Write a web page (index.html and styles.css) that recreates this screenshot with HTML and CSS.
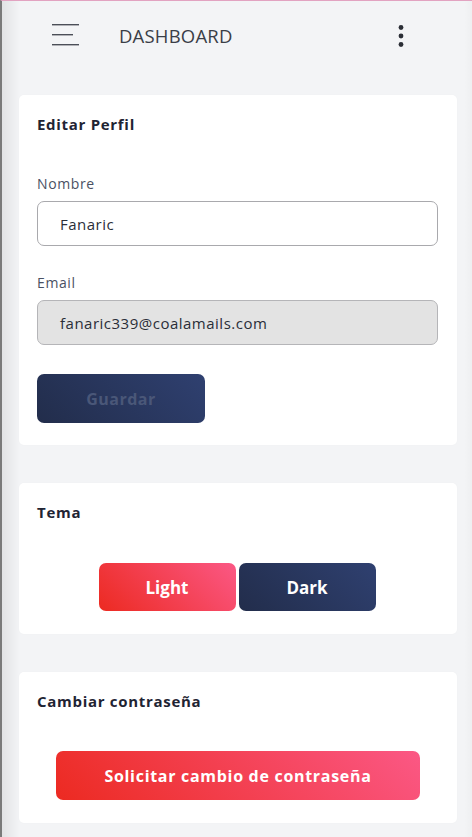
FILE: index.html
```html
<!DOCTYPE html>
<html lang="es">
<head>
<meta charset="utf-8">
<link rel="stylesheet" href="styles.css">
</head>
<body>
<div class="frame">
  <header class="topbar">
    <div class="left">
      <svg class="burger" width="28" height="22" viewBox="0 0 28 22">
        <rect x="0" y="0" width="27" height="1.4" fill="#4b4f58"/>
        <rect x="0" y="10" width="21" height="1.4" fill="#4b4f58"/>
        <rect x="0" y="20" width="27" height="1.4" fill="#4b4f58"/>
      </svg>
      <span class="title">DASHBOARD</span>
    </div>
    <svg class="kebab" width="6" height="22" viewBox="0 0 6 22">
      <circle cx="3" cy="2.5" r="2.4" fill="#2b2e36"/>
      <circle cx="3" cy="11" r="2.4" fill="#2b2e36"/>
      <circle cx="3" cy="19.5" r="2.4" fill="#2b2e36"/>
    </svg>
  </header>

  <main class="content">
    <section class="card card-profile">
      <h2 class="card-title">Editar Perfil</h2>
      <label class="field-label">Nombre</label>
      <div class="input">Fanaric</div>
      <label class="field-label email-label">Email</label>
      <div class="input input-disabled">fanaric339@coalamails.com</div>
      <button class="btn btn-dark btn-save">Guardar</button>
    </section>

    <section class="card card-theme">
      <h2 class="card-title">Tema</h2>
      <div class="theme-row">
        <button class="btn btn-red btn-theme">Light</button>
        <button class="btn btn-dark btn-theme btn-dark-on">Dark</button>
      </div>
    </section>

    <section class="card card-pass">
      <h2 class="card-title">Cambiar contraseña</h2>
      <div class="pass-row">
        <button class="btn btn-red btn-pass">Solicitar cambio de contraseña</button>
      </div>
    </section>
  </main>
</div>
</body>
</html>
```

FILE: styles.css
```css
* { box-sizing: border-box; }
html, body { margin: 0; padding: 0; }
body {
  width: 472px;
  height: 837px;
  overflow: hidden;
  background: #f3f4f6;
  font-family: "Open Sans", "DejaVu Sans", sans-serif;
  color: #1f2430;
}
.frame {
  height: 837px;
  border-top: 1px solid #e2a3c1;
  border-left: 2px solid #7a7a7a;
  background:
    linear-gradient(to right, rgba(0,0,0,0.07), rgba(0,0,0,0) 18px),
    linear-gradient(to left, rgba(0,0,0,0.02), rgba(0,0,0,0) 8px),
    #f3f4f6;
}
.topbar {
  height: 94px;
  display: flex;
  align-items: flex-start;
  justify-content: space-between;
  padding: 23px 68px 0 50px;
}
.left { display: flex; align-items: flex-start; }
.burger { display: block; }
.title {
  margin-left: 39px;
  font-size: 18.5px;
  font-weight: 400;
  color: #3a3e47;
  letter-spacing: 0.2px;
  line-height: 24px;
}
.kebab { display: block; margin-top: 1px; }

.content {
  padding: 0 15px 0 17px;
  display: flex;
  flex-direction: column;
  gap: 38px;
}
.card {
  background: #fff;
  border-radius: 5px;
  padding: 18px 18px 0 18px;
  box-shadow: 0 0 3px rgba(0,0,0,0.02);
}
.card-title {
  margin: 0;
  font-size: 15px;
  font-weight: 700;
  color: #1f2433;
  line-height: 22px;
  letter-spacing: 0.7px;
}
.card-profile { height: 350px; }
.field-label {
  display: block;
  margin-top: 39px;
  font-size: 14px;
  color: #4a5163;
  line-height: 20px;
  letter-spacing: 0.6px;
}
.email-label { margin-top: 27px; }
.input {
  margin-top: 7px;
  height: 45px;
  width: 401px;
  border: 1.5px solid #a9a9ad;
  border-radius: 7px;
  padding: 0 0 0 22px;
  display: flex;
  align-items: center;
  font-size: 15px;
  letter-spacing: 0.5px;
  color: #2a2e38;
}
.input-disabled { background: #e3e3e3; border-color: #b5b5b8; }
.btn {
  border: none;
  font-family: inherit;
  font-weight: 700;
  border-radius: 7px;
  color: #fff;
  display: flex;
  align-items: center;
  justify-content: center;
  padding: 0;
}
.btn-dark { background: linear-gradient(45deg, #222d4b, #2f4070); }
.btn-red { background: linear-gradient(45deg, #ec2a21, #fb5885); }
.btn-save {
  margin-top: 29px;
  width: 168px;
  height: 49px;
  font-size: 16px;
  letter-spacing: 0.5px;
  color: #4a5778;
}
.card-theme { height: 151px; }
.theme-row {
  margin-top: 40px;
  display: flex;
  justify-content: center;
  gap: 3px;
  padding-right: 2px;
}
.btn-theme {
  width: 137px;
  height: 48px;
  font-size: 17px;
}
.card-pass { height: 151px; }
.pass-row {
  margin-top: 39px;
  display: flex;
  justify-content: center;
}
.btn-pass {
  width: 364px;
  height: 49px;
  font-size: 16px;
  letter-spacing: 0.7px;
}
```
